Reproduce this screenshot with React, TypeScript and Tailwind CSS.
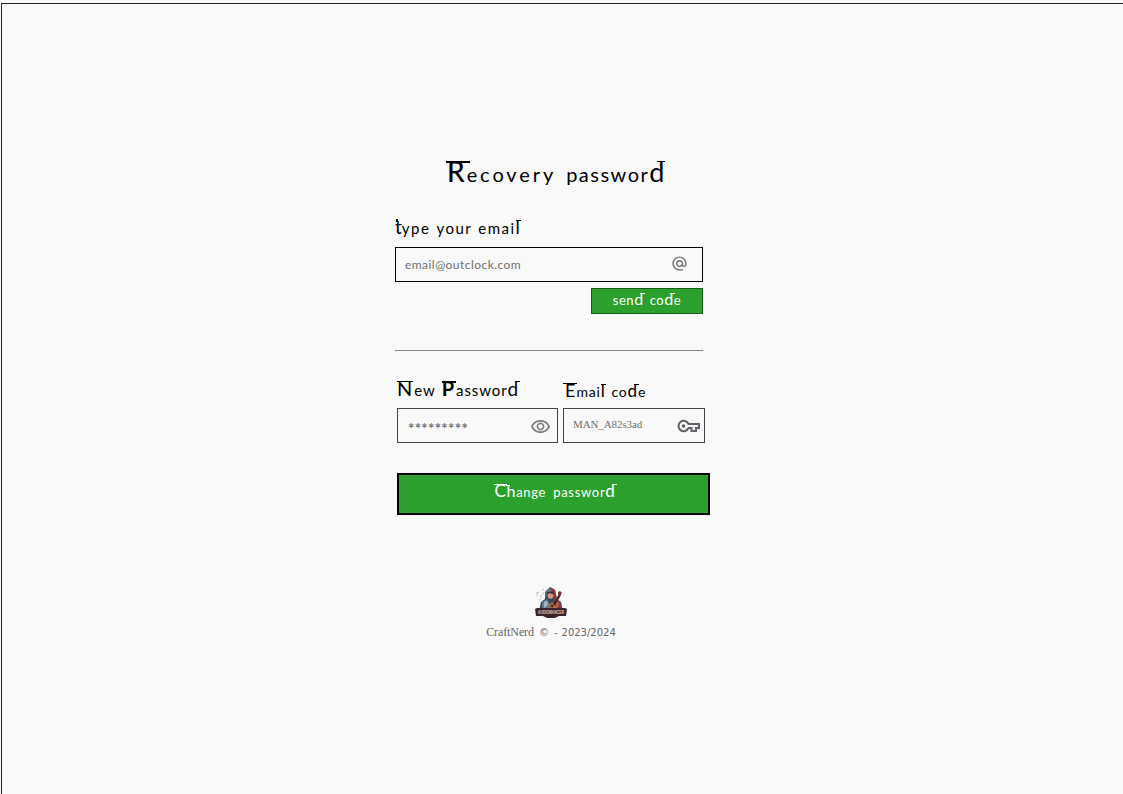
import type { ReactNode } from "react";
import { MdAlternateEmail, MdOutlineRemoveRedEye } from "react-icons/md";

/* A tall letter that carries the horizontal stroke of the display face. */
function Tall({ children, bar = "", className = "" }: { children: ReactNode; bar?: string; className?: string }) {
  return (
    <span className={`relative inline-block leading-none ${className}`}>
      {children}
      <span aria-hidden="true" className={`absolute bg-current ${bar}`} />
    </span>
  );
}

function KeyIcon() {
  return (
    <svg width="23" height="14" viewBox="0 0 23 14" className="mt-px" fill="none" stroke="#5f6368" strokeWidth="2" aria-hidden="true">
      <path d="M11.5 5A5.2 5.2 0 1 0 11.5 9H14.5V12H19V9H22V5Z" />
      <circle cx="6.5" cy="7" r="1.8" fill="#5f6368" stroke="none" />
    </svg>
  );
}

function Mascot() {
  return (
    <svg width="32" height="31" viewBox="0 0 32 31" aria-label="CraftNerd mascot">
      <path d="M4 24 6 15 10 12 10 5 15 0 20 3 22 12 26 15 28 24Z" fill="#3a465c" />
      <path d="M15 0 20 3 22 12 26 17 27 24 20 23 19 9Z" fill="#923642" />
      <path d="M10 12 11 4 15 1 17 4 12 7Z" fill="#66758a" />
      <path d="M12 5 17 4 19 8 17 12 13 11Z" fill="#d09a7c" />
      <path d="M12 5 18 4 19 8 15 6 12 8Z" fill="#49302e" />
      <path d="M7 15 12 12 15 17 14 23 7 23Z" fill="#637a8e" />
      <path d="M9 15 12 14 13 18 9 21Z" fill="#a9b7bf" />
      <path d="M14 18 17 15 20 17 23 14 24 17 21 23 14 23Z" fill="#b56a3f" />
      <path d="m18 17 6-10 2 1-6 11Z" fill="#4a2526" />
      <path d="m23 5 2-1 2 2-2 3-2-1Z" fill="#733b31" />
      <circle cx="17" cy="19" r="1.3" fill="#40222b" />
      <path d="M2 5v4m0-3 2-1m2 3v3m1-8 2-1M4 13l2-1M8 5v3" stroke="#9fa7ad" strokeWidth=".7" fill="none" />
      <path d="m0 22 2-1h28l2 1-1 7-7 0-4 2H12l-4-2-7 0Z" fill="#39242b" />
      <text x="16" y="27.2" textAnchor="middle" textLength="26" lengthAdjust="spacingAndGlyphs" fontSize="4.5" fontWeight="bold" fontFamily="Liberation Sans, sans-serif" fill="#e2c6b4">AUDIOMANCER</text>
    </svg>
  );
}

const tallBar = "right-[-1px] w-[5px] top-[2px] h-px";

export default function App() {
  return (
    <main className="h-[794px] w-full overflow-hidden bg-[#f9f9f9] pl-px pt-[3px] font-['Lato',sans-serif] text-black">
      <div className="h-[791px] border-l border-t border-[#222]">
        <form className="ml-[393px] flex w-[315px] flex-col pt-[150px]" onSubmit={(e) => e.preventDefault()}>
          <h1 className="ml-[52px] flex h-[40px] items-baseline gap-[10px] whitespace-nowrap text-[20px] leading-[40px] tracking-[2.9px]">
            <span>
              <Tall className="mr-[2px] text-[28px] font-medium tracking-normal" bar="left-[-1px] right-[-5px] top-[4px] h-[2px]">R</Tall>ecovery
            </span>
            <span className="tracking-[1.5px]">passwor<Tall className="text-[27px] tracking-normal" bar="right-[-1px] top-[3px] h-px w-[8px]">d</Tall></span>
          </h1>

          <label htmlFor="email" className="mt-[19px] flex h-[30px] items-baseline gap-[6px] whitespace-nowrap text-[15px] leading-[30px] tracking-[1.5px]">
            <span><Tall className="text-[19px] tracking-normal" bar="left-[1px] top-[2px] h-[3px] w-[1.5px]">t</Tall>ype</span><span>your</span><span>emai<Tall className="text-[18px] tracking-normal" bar={tallBar}>l</Tall></span>
          </label>
          <div className="mt-[4px] flex h-[35px] w-[308px] items-center justify-between border border-black pl-[9px] pr-[14px] text-[#707070]">
            <span id="email" className="mt-px text-[12px] tracking-[0.45px]">email@outclock.com</span>
            <MdAlternateEmail size={17} className="mb-[2px]" />
          </div>
          <button className="ml-[196px] mt-[6px] flex h-[26px] w-[112px] items-center justify-center gap-[6px] self-start border border-[#175c17] bg-[#2ca02c] pb-px text-[13px] tracking-[0.55px] text-white">
            <span>sen<Tall className="text-[16px]" bar={tallBar}>d</Tall></span><span>co<Tall className="text-[16px]" bar={tallBar}>d</Tall>e</span>
          </button>
          <hr className="mt-[36px] h-px w-[308px] border-0 bg-[#888]" />

          <div className="ml-[2px] mt-[23px] flex gap-[5px]">
            <div className="w-[161px]">
              <label className="flex h-[34px] items-baseline gap-[6px] whitespace-nowrap text-[15px] leading-[32px] tracking-[0.9px]">
                <span><Tall className="mr-[2px] text-[20px] tracking-normal" bar="left-0 right-[-1px] top-[3px] h-px">N</Tall>ew</span>
                <span><Tall className="mr-[2px] text-[20px] font-bold tracking-normal" bar="left-0 right-[-2px] top-[3px] h-[1.5px]">P</Tall>asswor<Tall className="text-[19px]" bar={tallBar}>d</Tall></span>
              </label>
              <div className="flex h-[35px] items-center justify-between border border-[#444] pl-[10px] pr-[6px] text-[#707070]">
                <span className="mt-[5px] text-[15px] font-bold leading-none tracking-[0.3px]">*********</span>
                <MdOutlineRemoveRedEye size={21} className="mt-px text-[#808080]" />
              </div>
            </div>
            <div className="w-[142px]">
              <label className="flex h-[34px] items-baseline gap-[6px] whitespace-nowrap text-[14px] leading-[36px] tracking-[0.8px]">
                <span className="pl-[2px]"><Tall className="mr-px text-[18px] tracking-normal" bar="left-[-2px] right-[-2px] top-[2px] h-px">E</Tall>mai<Tall className="text-[17px]" bar={tallBar}>l</Tall></span>
                <span>co<Tall className="text-[17px]" bar={tallBar}>d</Tall>e</span>
              </label>
              <div className="flex h-[35px] items-center justify-between border border-[#444] pl-[9px] pr-[4px] text-[#707070]">
                <span className="mb-[2px] font-['Liberation_Serif',serif] text-[11px] tracking-[-0.1px]">MAN_A82s3ad</span>
                <KeyIcon />
              </div>
            </div>
          </div>

          <button className="ml-[2px] mt-[30px] flex h-[42px] w-[313px] items-center justify-center gap-[7px] border-2 border-black bg-[#2ca02c] pb-[3px] pl-[3px] text-[13px] tracking-[0.7px] text-white">
            <span><Tall className="text-[17px]" bar="left-0 right-0 top-[2px] h-px">C</Tall><Tall className="text-[16px]" bar="left-[-1px] top-[2px] h-px w-[4px]">h</Tall>ange</span>
            <span>passwor<Tall className="text-[17px]" bar={tallBar}>d</Tall></span>
          </button>

          <footer className="ml-[91px] mt-[72px] flex w-[130px] flex-col items-center text-[#666]">
            <Mascot />
            <p className="mt-[6px] flex items-baseline gap-[5px] whitespace-nowrap font-['DejaVu_Sans',sans-serif] text-[10px] leading-[16px]">
              <span className="font-['Liberation_Serif',serif] text-[12px] tracking-[-0.1px]">CraftNerd</span>
              <span>©</span><span>-</span><span className="ml-[-1px]">2023/2024</span>
            </p>
          </footer>
        </form>
      </div>
    </main>
  );
}
